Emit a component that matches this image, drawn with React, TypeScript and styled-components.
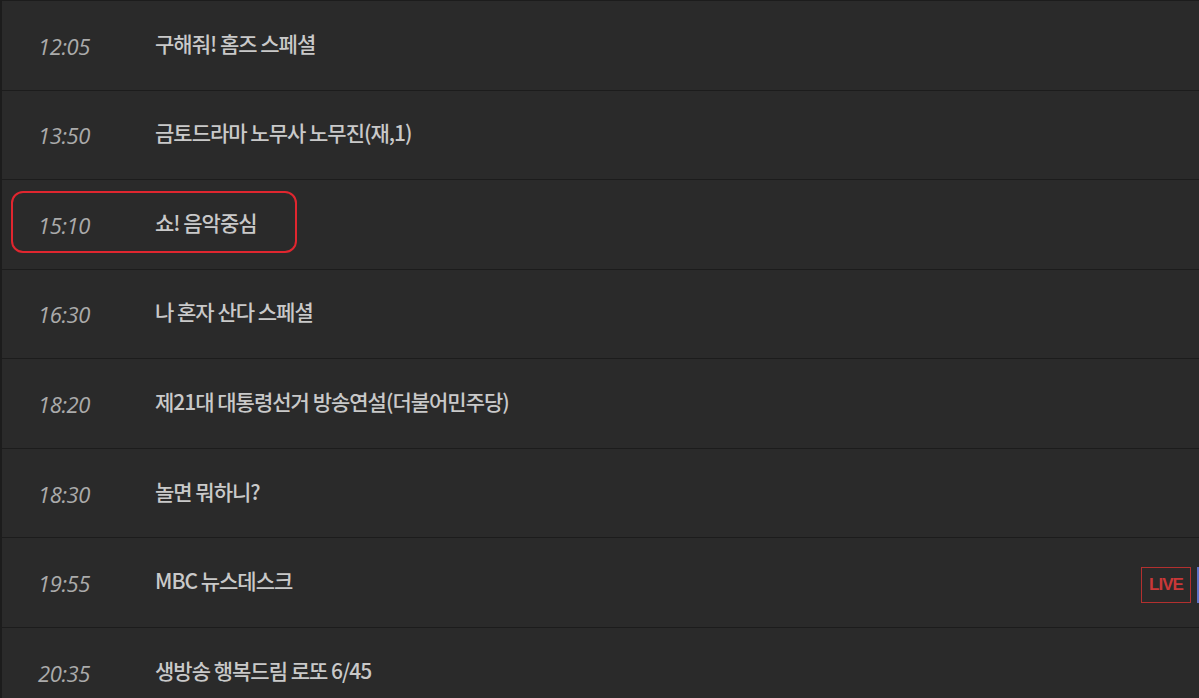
import React from "react";
import styled, { createGlobalStyle } from "styled-components";

type Program = {
    time: string;
    title: string;
    live?: boolean;
    marked?: boolean;
};

const programs: Program[] = [
    { time: "12:05", title: "구해줘! 홈즈 스페셜" },
    { time: "13:50", title: "금토드라마 노무사 노무진(재,1)" },
    { time: "15:10", title: "쇼! 음악중심", marked: true },
    { time: "16:30", title: "나 혼자 산다 스페셜" },
    { time: "18:20", title: "제21대 대통령선거 방송연설(더불어민주당)" },
    { time: "18:30", title: "놀면 뭐하니?" },
    { time: "19:55", title: "MBC 뉴스데스크", live: true },
    { time: "20:35", title: "생방송 행복드림 로또 6/45" },
];

const GlobalStyle = createGlobalStyle`
    html, body {
        margin: 0;
        padding: 0;
        background: #2a2a2a;
        overflow: hidden;
    }
    body {
        font-family: "Noto Sans CJK KR", "Noto Sans", sans-serif;
    }
`;

export default function App() {
    return (
        <>
            <GlobalStyle />
            <Schedule>
                {programs.map((p) => (
                    <Row key={p.time}>
                        <Time>{p.time}</Time>
                        <Title>{p.title}</Title>
                        {p.live && (
                            <Badges>
                                <LiveBadge>LIVE</LiveBadge>
                                <VodBadge />
                            </Badges>
                        )}
                        {p.marked && <Mark />}
                    </Row>
                ))}
            </Schedule>
        </>
    );
}

const Schedule = styled.ul`
    list-style: none;
    margin: 0;
    padding: 0;
    width: 1260px;
    border-top: 1px solid #1c1c1c;
    border-left: 2px solid #1c1c1c;
    background: #2a2a2a;
`;

const Row = styled.li`
    position: relative;
    box-sizing: border-box;
    height: 89.57px;
    display: flex;
    align-items: center;
    padding-left: 36px;
    border-bottom: 1px solid #1c1c1c;
`;

const Time = styled.span`
    width: 117px;
    flex-shrink: 0;
    font-family: "Open Sans", "Noto Sans", sans-serif;
    font-style: italic;
    font-size: 22px;
    letter-spacing: -0.4px;
    color: #ababab;
    padding-top: 1px;
`;

const Title = styled.span`
    flex: 1;
    font-size: 21px;
    font-weight: 500;
    letter-spacing: -1px;
    color: #c9c9c9;
    padding-bottom: 5px;
`;

const Badges = styled.div`
    display: flex;
    gap: 6px;
    margin-right: 15px;
    margin-top: 4px;
`;

const Badge = styled.span`
    box-sizing: border-box;
    height: 36px;
    width: 50px;
    display: flex;
    align-items: center;
    justify-content: center;
    font-family: "Liberation Sans", sans-serif;
    font-weight: bold;
    font-size: 17px;
    letter-spacing: -1px;
`;

const LiveBadge = styled(Badge)`
    border: 1px solid #b3302f;
    color: #c93838;
`;

const VodBadge = styled(Badge)`
    border: 2px solid #5d71c6;
`;

const Mark = styled.div`
    position: absolute;
    left: 9px;
    top: 11px;
    width: 286px;
    height: 62px;
    border: 2.5px solid #e0262f;
    border-radius: 12px;
    box-sizing: border-box;
    pointer-events: none;
`;
